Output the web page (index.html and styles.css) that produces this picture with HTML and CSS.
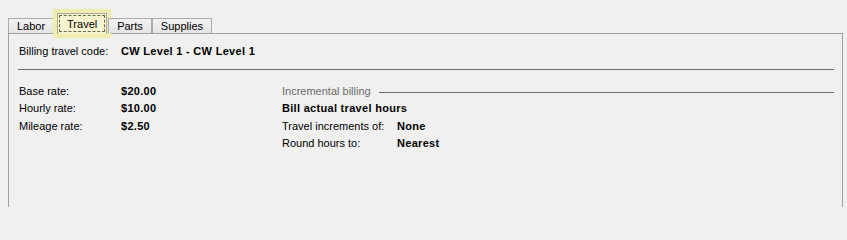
FILE: index.html
```html
<!DOCTYPE html>
<html>
<head>
<meta charset="utf-8">
<link rel="stylesheet" href="styles.css">
</head>
<body>
<div class="tabs">
  <div class="tab tab-labor">Labor</div>
  <div class="tab selected"><span class="focus">Travel</span></div>
  <div class="tab">Parts</div>
  <div class="tab">Supplies</div>
</div>
<div class="panel">
  <div class="code-row">
    <span>Billing travel code:</span>
    <span class="val">CW Level 1 - CW Level 1</span>
  </div>
  <div class="sep"></div>
  <div class="cols">
    <div class="col-left">
      <span>Base rate:</span><span class="val">$20.00</span>
      <span>Hourly rate:</span><span class="val">$10.00</span>
      <span>Mileage rate:</span><span class="val">$2.50</span>
    </div>
    <div class="col-right">
      <div class="group-head">
        <span class="group-title">Incremental billing</span>
        <span class="group-line"></span>
      </div>
      <div class="val">Bill actual travel hours</div>
      <div class="pair">
        <span>Travel increments of:</span><span class="val">None</span>
      </div>
      <div class="pair">
        <span>Round hours to:</span><span class="val">Nearest</span>
      </div>
    </div>
  </div>
</div>
</body>
</html>
```

FILE: styles.css
```css
html, body {
  margin: 0;
  padding: 0;
}
body {
  background: #f0f0f0;
  font-family: "Liberation Sans", Arial, sans-serif;
  font-size: 11px;
  color: #000;
  width: 847px;
  height: 207px;
  overflow: hidden;
}
.tabs {
  position: relative;
  z-index: 2;
  display: flex;
  align-items: flex-end;
  height: 33px;
  padding-left: 8px;
  box-sizing: border-box;
}
.tab {
  box-sizing: border-box;
  height: 15px;
  padding: 0 8px;
  border: 1px solid #acacac;
  border-bottom: none;
  background: linear-gradient(#f3f3f3, #e4e4e4);
  line-height: 14px;
  white-space: nowrap;
}
.tab-labor {
  margin-right: 3px;
}
.tab.selected {
  width: 50px;
  height: 21px;
  margin-bottom: -1px;
  margin-right: 1px;
  padding: 1px;
  border-color: #a8a79a;
  background: #f7f5cf;
  box-shadow: 0 0 1px 4px #f1edb1;
  text-align: center;
}
.focus {
  display: block;
  height: 17px;
  box-sizing: border-box;
  border: 1px dashed #6b6a5a;
  line-height: 15px;
  padding-top: 1px;
}
.panel {
  margin-left: 8px;
  width: 835px;
  height: 185px;
  box-sizing: border-box;
  border: 1px solid #a0a0a0;
  padding: 8px 8px 0 10px;
}
.code-row {
  display: grid;
  grid-template-columns: 102px auto;
  line-height: 18px;
}
.val {
  font-weight: bold;
  letter-spacing: 0.3px;
}
.sep {
  margin-top: 9px;
  margin-left: -1px;
  height: 1px;
  background: #6d6d6d;
}
.cols {
  display: flex;
  margin-top: 12.5px;
  line-height: 17.5px;
}
.col-left {
  width: 263px;
  display: grid;
  grid-template-columns: 102px auto;
  align-content: start;
}
.col-right {
  flex: 1;
  display: flex;
  flex-direction: column;
}
.group-head {
  display: flex;
  align-items: flex-start;
}
.group-title {
  color: #6d6d6d;
}
.group-line {
  flex: 1;
  height: 1px;
  margin-top: 9.5px;
  margin-left: 8px;
  background: #6d6d6d;
}
.pair {
  display: grid;
  grid-template-columns: 115px auto;
}
```
